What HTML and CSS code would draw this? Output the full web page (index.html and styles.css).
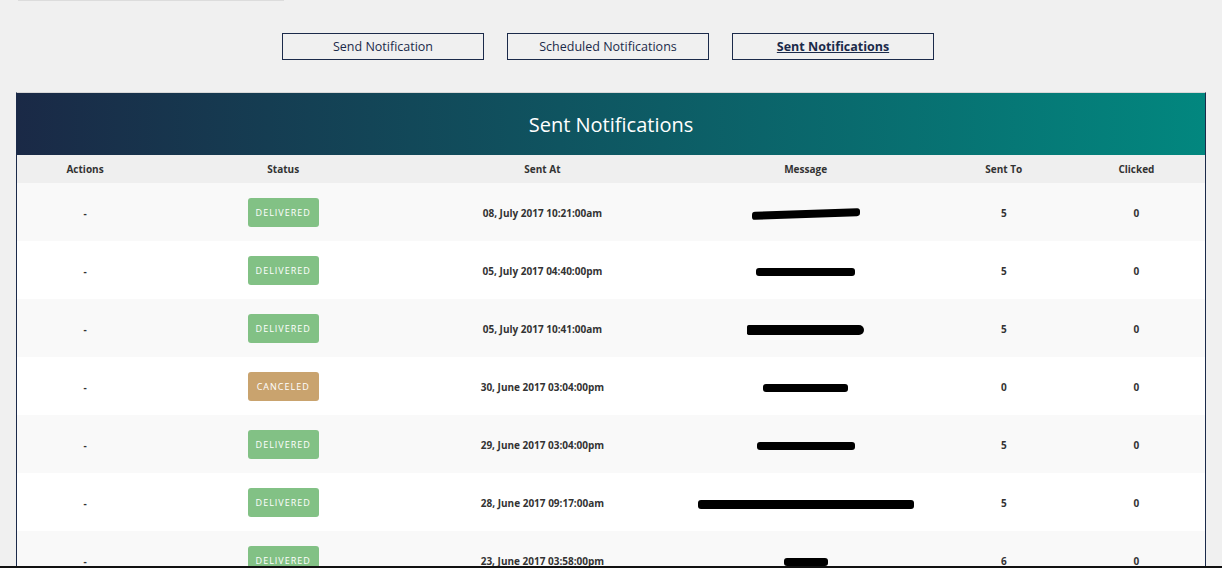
FILE: index.html
```html
<!DOCTYPE html>
<html>
<head>
<meta charset="utf-8">
<title>Sent Notifications</title>
<link rel="stylesheet" href="styles.css">
</head>
<body>
<div class="top-strip"></div>
<nav class="tabs">
  <a class="tab">Send Notification</a>
  <a class="tab">Scheduled Notifications</a>
  <a class="tab active">Sent Notifications</a>
</nav>
<section class="panel">
  <header class="panel-head">Sent Notifications</header>
  <table class="grid">
    <colgroup>
      <col class="c1"><col class="c2"><col class="c3"><col class="c4"><col class="c5"><col class="c6">
    </colgroup>
    <thead>
      <tr><th>Actions</th><th>Status</th><th>Sent At</th><th>Message</th><th>Sent To</th><th>Clicked</th></tr>
    </thead>
    <tbody>
      <tr><td>-</td><td><span class="badge ok">Delivered</span></td><td>08, July 2017 10:21:00am</td><td><span class="redact r1" style="width:108px"></span></td><td>5</td><td>0</td></tr>
      <tr><td>-</td><td><span class="badge ok">Delivered</span></td><td>05, July 2017 04:40:00pm</td><td><span class="redact r2" style="width:99px"></span></td><td>5</td><td>0</td></tr>
      <tr><td>-</td><td><span class="badge ok">Delivered</span></td><td>05, July 2017 10:41:00am</td><td><span class="redact r3" style="width:117px"></span></td><td>5</td><td>0</td></tr>
      <tr><td>-</td><td><span class="badge warn">Canceled</span></td><td>30, June 2017 03:04:00pm</td><td><span class="redact r4" style="width:85px"></span></td><td>0</td><td>0</td></tr>
      <tr><td>-</td><td><span class="badge ok">Delivered</span></td><td>29, June 2017 03:04:00pm</td><td><span class="redact r5" style="width:98px"></span></td><td>5</td><td>0</td></tr>
      <tr><td>-</td><td><span class="badge ok">Delivered</span></td><td>28, June 2017 09:17:00am</td><td><span class="redact r6" style="width:216px"></span></td><td>5</td><td>0</td></tr>
      <tr><td>-</td><td><span class="badge ok">Delivered</span></td><td>23, June 2017 03:58:00pm</td><td><span class="redact r7" style="width:44px"></span></td><td>6</td><td>0</td></tr>
    </tbody>
  </table>
</section>
<div class="bottom-bar"></div>
</body>
</html>
```

FILE: styles.css
```css
html {
  overflow: hidden;
}
body {
  margin: 0;
  background: #f0f0f0;
  font-family: "Open Sans", "Noto Sans", sans-serif;
  color: #333;
}
.top-strip {
  height: 1px;
  width: 266px;
  margin-left: 18px;
  background: #dcdcdc;
}
.tabs {
  display: flex;
  gap: 23px;
  padding-left: 282px;
  margin-top: 32px;
}
.tab {
  box-sizing: border-box;
  width: 202px;
  height: 27px;
  border: 1px solid #1b2a4a;
  display: flex;
  align-items: center;
  justify-content: center;
  font-size: 12.5px;
  color: #1b2a4a;
  cursor: pointer;
}
.tab.active {
  font-weight: 700;
  text-decoration: underline;
}
.panel {
  margin: 32px 16px 0 16px;
  border: 1px solid #1b2a4a;
  border-top: 1px solid #d8d8d8;
  background: #fff;
}
.panel-head {
  height: 62px;
  display: flex;
  align-items: center;
  justify-content: center;
  background: linear-gradient(to right, #1a2946, #02877f);
  color: #fff;
  font-size: 20px;
}
.grid {
  width: 100%;
  border-collapse: collapse;
  table-layout: fixed;
}
.c1 { width: 136px; }
.c2 { width: 260px; }
.c3 { width: 258px; }
.c4 { width: 268px; }
.c5 { width: 128px; }
.c6 { width: 137px; }
.grid th {
  height: 28px;
  padding: 0;
  background: #efefef;
  font-size: 10px;
  font-weight: 700;
  color: #333;
  text-align: center;
}
.grid td {
  box-sizing: border-box;
  height: 58px;
  padding: 2px 0 0 0;
  text-align: center;
  font-size: 10px;
  font-weight: 700;
  color: #333;
}
.grid tbody tr:nth-child(odd) {
  background: #f9f9f9;
}
.grid tbody tr:nth-child(even) {
  background: #fff;
}
.badge {
  display: inline-block;
  box-sizing: border-box;
  width: 71px;
  height: 29px;
  line-height: 29px;
  margin-top: -2px;
  border-radius: 3px;
  color: #fff;
  font-size: 9px;
  font-weight: 400;
  letter-spacing: 1px;
  text-transform: uppercase;
  vertical-align: middle;
}
.badge.ok { background: #82c185; }
.badge.warn { background: #c9a36e; }
.redact {
  display: inline-block;
  height: 8px;
  background: #000;
  border-radius: 3px;
  vertical-align: middle;
}
.r1 { transform: skewY(-2deg); }
.r3 { height: 10px; border-radius: 2px 6px 6px 2px; }
.r6 { height: 9px; }
.bottom-bar {
  position: fixed;
  left: 0;
  right: 0;
  bottom: 0;
  height: 2px;
  background: #111;
}
```
